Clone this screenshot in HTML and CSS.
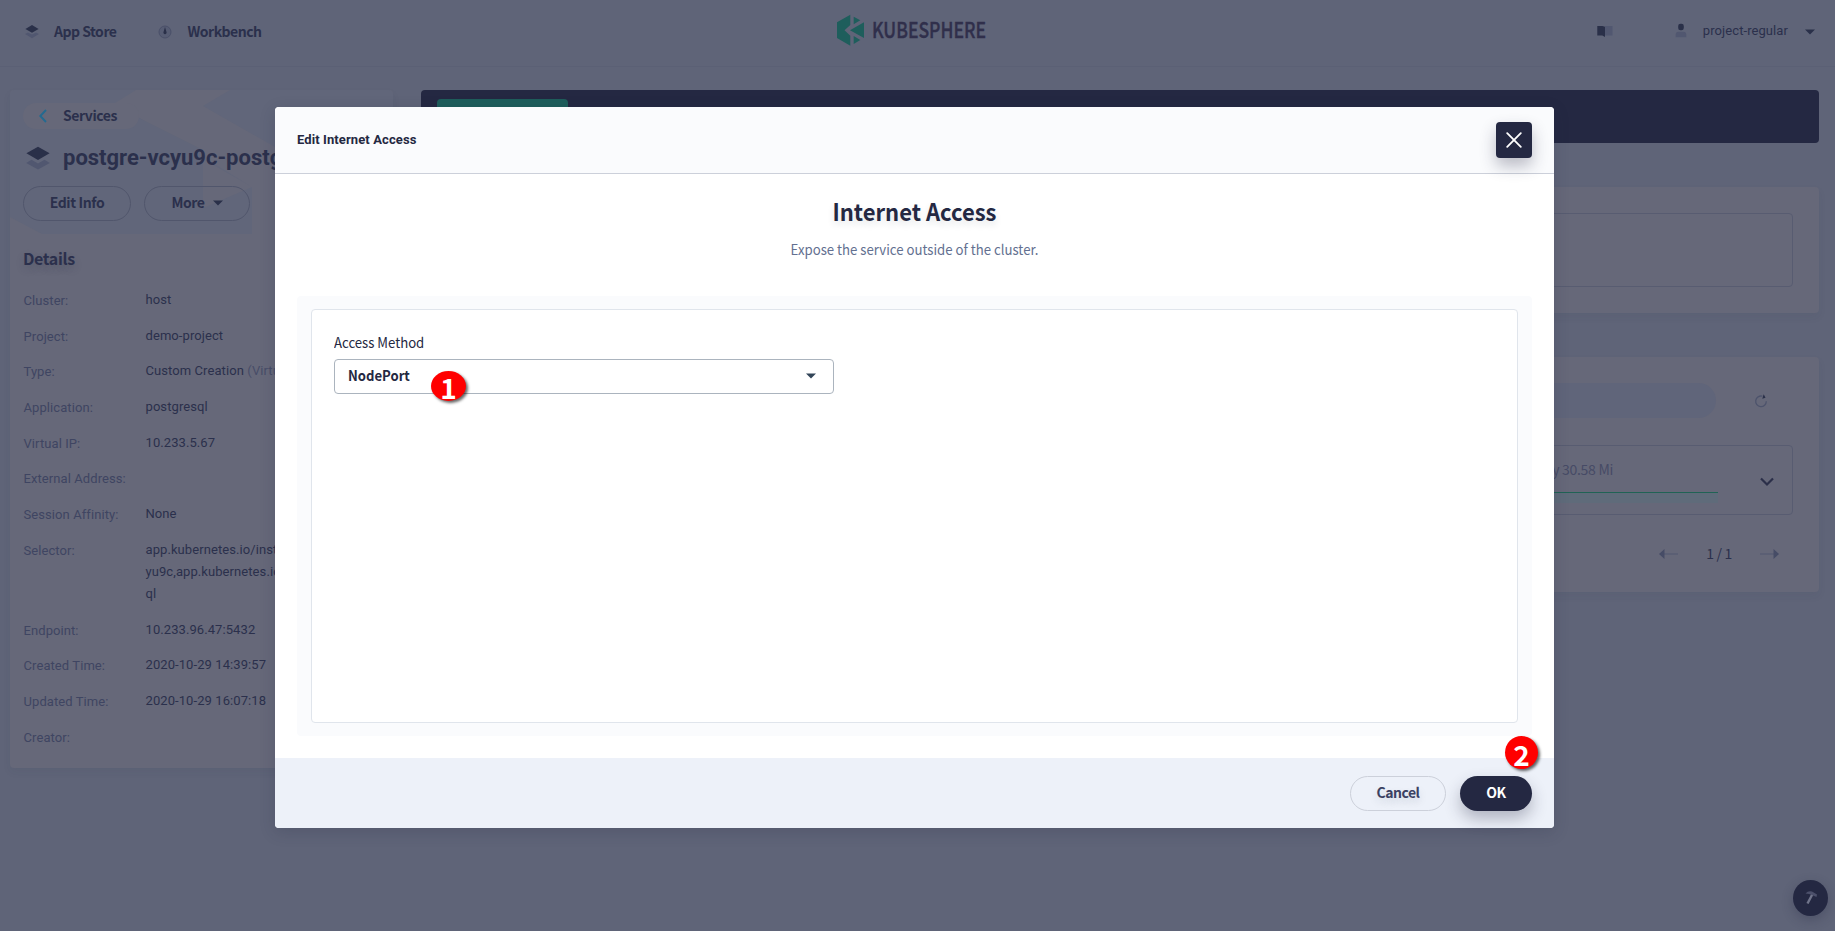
FILE: index.html
```html
<!DOCTYPE html>
<html lang="en">
<head>
<meta charset="utf-8">
<title>KubeSphere - Edit Internet Access</title>
<link rel="stylesheet" href="styles.css">
</head>
<body>
<div class="page">
  <header class="topbar">
    <nav class="nav">
      <a class="nav-item"><svg width="16" height="16" viewBox="0 0 16 16"><path fill="#515770" d="M1 10l7 4.3 7-4.3-3-1.6-4 2.2-4-2.2z"/><path fill="#2a3049" d="M8 1l6.6 3.9L8 8.8 1.4 4.9z"/></svg><span>App Store</span></a>
      <a class="nav-item"><svg width="16" height="16" viewBox="0 0 16 16"><circle cx="8" cy="8" r="6" fill="#565c73" stroke="#4a5069" stroke-width="1"/><path fill="#2a3049" d="M8 3l1.5 5a1.6 1.6 0 1 1-3 0z"/></svg><span>Workbench</span></a>
    </nav>
    <svg class="logo" width="150" height="34" viewBox="0 0 150 34">
      <g fill="#1e5e5c"><path d="M0 9.300 13.300 1.700V12L7.500 17.300l5.800 5.400V32.700L0 25z"/><path d="M16.700 3.700 23.300 7.300l-6.600 4z"/><path d="M13 17.300 27 9.300V25z"/><path d="M16.700 23l6.600 4-6.600 4z"/></g>
      <text x="35" y="25.300" textLength="114" lengthAdjust="spacingAndGlyphs" class="logo-text">KUBESPHERE</text>
    </svg>
    <div class="user">
      <svg width="16" height="12" viewBox="0 0 16 12"><path fill="#515770" d="M8 1h7.500v9.500H8z"/><path fill="#2a3049" d="M.3 1h5L8 1.800V12l-2.700-1.400h-5z"/></svg>
      <svg class="person" width="12" height="16" viewBox="0 0 12 16"><path fill="#515770" d="M.7 14V11.500Q.7 9 3.500 8.700h5Q11.300 9 11.300 11.500V14.300H.7z"/><rect x="3.200" y=".8" width="5.600" height="6.400" rx="2.300" fill="#2a3049"/></svg>
      <span>project-regular</span>
      <svg class="user-caret" width="10" height="6" viewBox="0 0 10 6"><path fill="#2a3049" d="M0 .5h10L5 5.500z"/></svg>
    </div>
  </header>

  <main class="content">
    <aside class="side">
      <div class="side-head">
        <svg class="pattern" width="383" height="144" viewBox="0 0 383 144"><path fill="#666879" d="M126 0h94l-27 16 190 108v20H242V97l-49-28v75h-60L242 97 105 13z"/><path fill="#61667a" d="M193 60 129 28v116h64z"/><path fill="#666879" d="M0 127l32 17H0z"/></svg>
        <div class="crumb"><svg width="8" height="14" viewBox="0 0 8 14"><path d="M7 1 1.300 7 7 13" fill="none" stroke="#236a90" stroke-width="1.900"/></svg><span>Services</span></div>
        <div class="title"><svg width="24" height="24" viewBox="0 0 24 24"><path fill="#515770" d="M.2 17 12 23.500 23.800 17 18.500 13.800 12 17.500 5.500 13.800z"/><path fill="#2a3049" d="M12 .7 23.600 7.300 12 14 .4 7.300z"/></svg><span>postgre-vcyu9c-postgresql</span></div>
        <div class="actions"><span class="ghost edit">Edit Info</span><span class="ghost more">More <svg width="10" height="6" viewBox="0 0 10 6"><path fill="#2a3049" d="M0 .5h10L5 5.500z"/></svg></span></div>
      </div>
      <h3 class="details">Details</h3>
      <dl class="rows">
        <div><dt>Cluster:</dt><dd>host</dd></div>
        <div><dt>Project:</dt><dd>demo-project</dd></div>
        <div><dt>Type:</dt><dd>Custom Creation <em>(Virtual IP)</em></dd></div>
        <div><dt>Application:</dt><dd>postgresql</dd></div>
        <div><dt>Virtual IP:</dt><dd>10.233.5.67</dd></div>
        <div><dt>External Address:</dt><dd></dd></div>
        <div><dt>Session Affinity:</dt><dd>None</dd></div>
        <div><dt>Selector:</dt><dd>app.kubernetes.io/instance=postgre-vc<br>yu9c,app.kubernetes.io/name=postgres<br>ql</dd></div>
        <div><dt>Endpoint:</dt><dd>10.233.96.47:5432</dd></div>
        <div><dt>Created Time:</dt><dd>2020-10-29 14:39:57</dd></div>
        <div><dt>Updated Time:</dt><dd>2020-10-29 16:07:18</dd></div>
        <div><dt>Creator:</dt><dd></dd></div>
      </dl>
    </aside>
    <section class="main">
      <div class="tabs"><span class="tab"></span></div>
      <div class="card ports"><div class="outline"></div></div>
      <div class="card pods">
        <div class="search-row"><div class="search"></div>
          <svg width="14" height="14" viewBox="0 0 14 14"><path d="M8.300 2.200A5.300 5.300 0 1 0 12.300 7.300" fill="none" stroke="#4d536c" stroke-width="1.300"/><path fill="#2a3049" d="M9.700.3 11.500 3.700 8.300 4.700z"/></svg></div>
        <div class="pod"><div class="usage"><span>Memory 30.58 Mi</span><div class="chart"></div></div>
          <svg class="expand" width="14" height="10" viewBox="0 0 14 10"><path d="M1 1.500l6 6 6-6" fill="none" stroke="#2b2f49" stroke-width="2.200"/></svg></div>
        <div class="pager">
          <svg width="19" height="12" viewBox="0 0 19 12"><path d="M5 6h14" stroke="#505670"/><path fill="#464c66" d="M0 6l5.500-5v10z"/></svg>
          <span>1 / 1</span>
          <svg width="19" height="12" viewBox="0 0 19 12"><path d="M0 6h14" stroke="#505670"/><path fill="#464c66" d="M19 6l-5.500-5v10z"/></svg>
        </div>
      </div>
    </section>
  </main>

  <div class="tool"><svg width="16" height="18" viewBox="0 0 16 18"><path d="M9.500 5 4.500 14.500" stroke="#70748a" stroke-width="2.400"/><path fill="#4c506b" d="M2.500 4.500Q5 1.500 9 2.500l5 3-.5 2.500L9 6 6 5z"/></svg></div>

  <div class="modal">
    <div class="modal-head"><span>Edit Internet Access</span>
      <button class="close" aria-label="Close"><svg width="16" height="16" viewBox="0 0 16 16"><path d="M1.200 1.200l13.600 13.600M14.800 1.200 1.200 14.800" stroke="#fff" stroke-width="1.800" stroke-linecap="round"/></svg></button></div>
    <div class="modal-body">
      <h2>Internet Access</h2>
      <p>Expose the service outside of the cluster.</p>
      <div class="panel"><div class="form">
        <label>Access Method</label>
        <div class="select"><span>NodePort</span><svg width="10" height="6" viewBox="0 0 10 6"><path fill="#324558" d="M0 .5h10L5 5.500z"/></svg></div>
      </div></div>
    </div>
    <div class="modal-foot"><button class="btn cancel">Cancel</button><button class="btn ok">OK</button></div>
    <span class="mark one">1</span>
    <span class="mark two">2</span>
  </div>
</div>
</body>
</html>
```
FILE: styles.css
```css
* { box-sizing: border-box; }
body { margin: 0; background: #5f6478; color: #2b304c; font: 13px/22px Roboto, sans-serif; overflow: hidden; }
svg { display: block; flex: none; }
button { font: inherit; border: 0; padding: 0; }
.page { position: relative; width: 1835px; height: 931px; overflow: hidden; }

.topbar { height: 67px; display: flex; justify-content: space-between; border-bottom: 1px solid #5b6075; }
.nav { display: flex; gap: 41px; padding: 22px 0 0 24px; width: 813px; height: 44px; }
.nav-item { display: flex; align-items: center; height: 20px; gap: 14px; font: 700 14px/20px "Noto Sans CJK SC", sans-serif; letter-spacing: -.5px; }
.nav-item span { padding-bottom: 2px; }
.logo { margin: 13px 0 0 24px; overflow: visible; }
.logo-text { font: 500 22px "Noto Sans CJK SC", sans-serif; fill: #302f4b; stroke: #302f4b; stroke-width: .4px; }
.user { display: flex; align-items: center; height: 20px; margin: 21px 20px 0 auto; letter-spacing: .08px; }
.person { margin: 0 16px 0 62px; }
.user-caret { margin: 1px 0 0 17px; }

.content { display: flex; gap: 28px; padding: 23px 16px 0 10px; align-items: flex-start; }
.side { width: 383px; height: 678px; flex: none; border-radius: 4px; background: #666879; box-shadow: 0 4px 8px rgba(36, 46, 66, .06); overflow: hidden; }
.side-head { position: relative; height: 144px; padding: 13px 13px 0; background: #61667a; }
.pattern { position: absolute; inset: 0; }
.crumb { position: relative; width: 116px; height: 26px; border-radius: 13px; background: #666879; display: flex; align-items: center; gap: 16px; padding-left: 16px; font: 700 14px/20px "Noto Sans CJK SC", sans-serif; letter-spacing: -.45px; }
.crumb span { padding-bottom: 2px; }
.title { position: relative; display: flex; gap: 13px; margin: 14px 0 0 3px; height: 30px; align-items: center; font: 700 22px/30px Roboto, sans-serif; white-space: nowrap; }
.actions { position: relative; display: flex; gap: 13px; margin-top: 13px; }
.ghost { height: 35px; border: 1px solid #51566c; border-radius: 18px; display: flex; align-items: center; justify-content: center; padding-bottom: 3px; font: 700 14px/20px "Noto Sans CJK SC", sans-serif; letter-spacing: -.4px; }
.edit { width: 108px; }
.more { width: 106px; gap: 8px; }
.more svg { margin-top: 2px; }
.details { margin: 11px 0 0 13px; font: 700 16px/26px "Noto Sans CJK SC", sans-serif; letter-spacing: -.35px; text-shadow: 0 4px 8px rgba(36, 46, 66, .2); }
.rows { margin: 18px 0 0 13.500px; width: 360px; letter-spacing: .08px; }
.rows div { display: flex; margin-bottom: 13.700px; min-height: 22px; }
.rows dt { width: 122px; flex: none; color: #3f4562; padding-top: 1px; height: 22px; }
.rows dd { margin: 0; white-space: nowrap; }
.rows em { font-style: normal; color: #484d68; }

.main { width: 1398px; display: flex; flex-direction: column; gap: 44px; }
.tabs { height: 53px; border-radius: 4px; background: #242842; padding: 9px 16px; }
.tab { display: block; width: 131px; height: 35px; border-radius: 4px; background: #1e5e5c; }
.card { border-radius: 4px; background: #666879; box-shadow: 0 4px 8px rgba(36, 46, 66, .06); padding: 26px; }
.ports { height: 126px; }
.outline { height: 74px; border: 1px solid #585c71; border-radius: 4px; }
.pods { height: 235px; }
.search-row { display: flex; align-items: center; gap: 38px; height: 35px; }
.search { width: 1269px; height: 35px; border-radius: 18px; background: #60657a; }
.pod { height: 70px; margin-top: 27px; border: 1px solid #585c71; border-radius: 4px; display: flex; justify-content: flex-end; gap: 42px; padding-right: 18px; align-items: center; }
.usage { width: 240px; font: 14px/20px "Noto Sans CJK SC", sans-serif; color: #464b66; height: 54px; padding-left: 26px; padding-top: 6px; }
.chart { height: 11px; margin-top: 13px; border-top: 1px solid #206355; background: #5f6b7a; }
.usage span { display: block; width: 109px; text-align: right; white-space: nowrap; letter-spacing: -.3px; }
.expand { margin-top: 4px; }
.pager { display: flex; justify-content: flex-end; align-items: center; gap: 28px; height: 22px; margin: 28px 14px 0 0; font: 14px/20px "Noto Sans CJK SC", sans-serif; letter-spacing: -.3px; }
.pager span { padding-bottom: 2px; }

.tool { position: absolute; left: 1793px; top: 880px; width: 35px; height: 36px; border-radius: 50%; background: #242842; box-shadow: 0 4px 12px rgba(36, 40, 66, .3); display: grid; place-items: center; }

.modal { position: absolute; left: 275px; top: 107px; width: 1279px; height: 721px; border-radius: 4px; background: #fff; box-shadow: 0 4px 16px rgba(36, 40, 66, .2); display: flex; flex-direction: column; color: #242842; }
.modal-head { height: 67px; border-bottom: 1px solid #ccd0da; border-radius: 4px 4px 0 0; background: #fafbfd; display: flex; align-items: center; justify-content: space-between; padding: 0 22px; font: 700 13px/20px Roboto, sans-serif; letter-spacing: .1px; }
.close { width: 36px; height: 36px; border-radius: 4px; background: #242842; display: grid; place-items: center; box-shadow: 0 8px 16px rgba(36, 40, 66, .3); margin-bottom: 1px; }
.modal-body { flex: 1; padding: 0 22px; text-align: center; }
h2 { margin: 21px 0 0; font: 700 23.500px/32px "Noto Sans CJK SC", sans-serif; transform: scaleX(.936); text-shadow: 0 4px 8px rgba(36, 46, 66, .12); }
p { margin: 12px 0 0; font: 14px/20px "Noto Sans CJK SC", sans-serif; transform: scaleX(.942); color: #637090; }
.panel { margin-top: 37px; height: 440px; padding: 13px 14px; border-radius: 4px; background: #fafbfd; text-align: left; }
.form { height: 414px; border: 1px solid #e0e5ec; border-radius: 4px; background: #fff; padding: 22px 22px; }
label { display: block; font: 14px/20px "Noto Sans CJK SC", sans-serif; transform: scaleX(.94); transform-origin: left; }
.select { width: 500px; height: 35px; margin-top: 7px; border: 1px solid #abb4be; border-radius: 4px; display: flex; align-items: center; justify-content: space-between; padding: 0 17px 0 13px; font: 700 14px/20px "Noto Sans CJK SC", sans-serif; }
.select span { padding-bottom: 3px; transform: scaleX(.935); transform-origin: left; }
.select svg { margin-bottom: 1px; }
.modal-foot { height: 70px; border-radius: 0 0 4px 4px; background: #edf1f9; display: flex; justify-content: flex-end; gap: 14px; padding: 18px 22px 0; }
.btn { height: 35px; border-radius: 18px; padding-bottom: 3px; font: 700 14px/20px "Noto Sans CJK SC", sans-serif; letter-spacing: -.5px; }
.cancel { width: 96px; border: 1px solid #ccd0da; background: transparent; color: #3b4162; text-shadow: 0 4px 8px rgba(36, 46, 66, .15); }
.ok { width: 72px; background: #242842; color: #fff; box-shadow: 0 8px 16px rgba(36, 40, 66, .3); }
.mark { position: absolute; border-radius: 50%; background: #f00; color: #fff; text-align: center; font: 700 28px/32px "Noto Sans CJK SC", sans-serif; box-shadow: 2px 2px 3px rgba(0, 0, 0, .6); }
.one { left: 156px; top: 264px; width: 35px; height: 30px; }
.two { left: 1230px; top: 629px; width: 33px; height: 33px; line-height: 36px; }
```
